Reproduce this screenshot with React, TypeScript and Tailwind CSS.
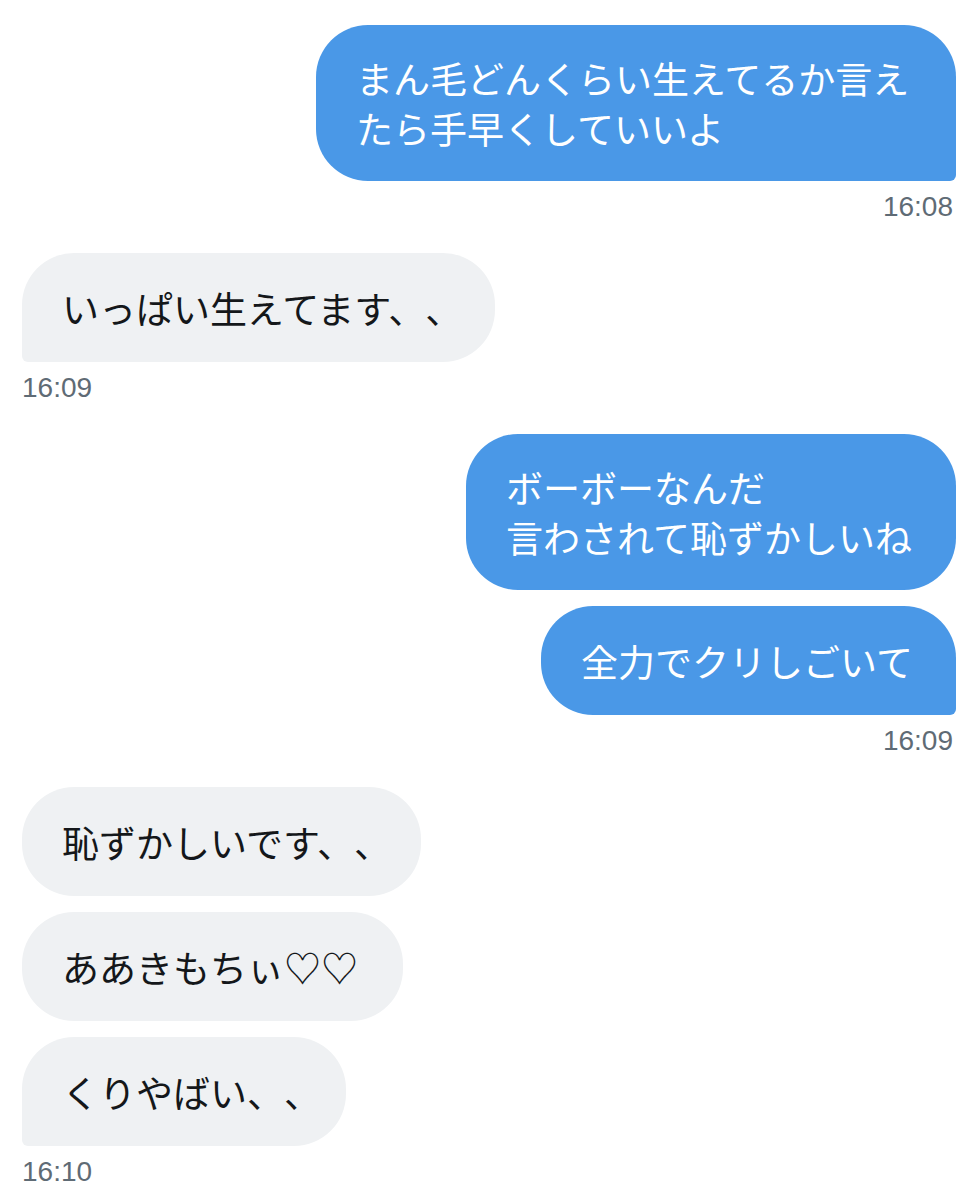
type Msg = {
  lines: string[];
  width: string;
  tail?: boolean;
};

type Group = {
  mine: boolean;
  time: string;
  msgs: Msg[];
};

const groups: Group[] = [
  {
    mine: true,
    time: "16:08",
    msgs: [{ lines: ["まん毛どんくらい生えてるか言え", "たら手早くしていいよ"], width: "w-[640px]", tail: true }],
  },
  {
    mine: false,
    time: "16:09",
    msgs: [{ lines: ["いっぱい生えてます、、"], width: "w-[473px]", tail: true }],
  },
  {
    mine: true,
    time: "16:09",
    msgs: [
      { lines: ["ボーボーなんだ", "言わされて恥ずかしいね"], width: "w-[490px]" },
      { lines: ["全力でクリしごいて"], width: "w-[415px]", tail: true },
    ],
  },
  {
    mine: false,
    time: "16:10",
    msgs: [
      { lines: ["恥ずかしいです、、"], width: "w-[399px]" },
      { lines: ["ああきもちぃ♡♡"], width: "w-[381px]" },
      { lines: ["くりやばい、、"], width: "w-[324px]", tail: true },
    ],
  },
];

function Bubble({ msg, mine }: { msg: Msg; mine: boolean }) {
  const corner = msg.tail ? (mine ? "rounded-br-[6px]" : "rounded-bl-[6px]") : "";
  const colors = mine ? "bg-[#4a98e7] text-white" : "bg-[#eff1f3] text-[#14171a]";
  const height = msg.lines.length > 1 ? "h-[156px]" : "h-[109px]";
  return (
    <div
      className={`${msg.width} ${height} ${colors} ${corner} flex flex-col justify-center rounded-[52px] pl-[40px] pr-2 text-[37px] leading-[50px] whitespace-nowrap [text-spacing-trim:space-all]`}
    >
      {msg.lines.map((l, i) => (
        <div key={i}>{l}</div>
      ))}
    </div>
  );
}

export default function App() {
  return (
    <div
      className="w-[979px] min-h-[1200px] bg-white pl-[22px] pr-[23px] pt-[25px]"
      style={{ fontFamily: '"Noto Sans CJK JP", "Noto Sans", sans-serif' }}
    >
      {groups.map((g, gi) => (
        <div key={gi} className={`flex flex-col ${g.mine ? "items-end" : "items-start"} mb-[30px]`}>
          <div className={`flex flex-col gap-[16px] ${g.mine ? "items-end" : "items-start"}`}>
            {g.msgs.map((m, mi) => (
              <Bubble key={mi} msg={m} mine={g.mine} />
            ))}
          </div>
          <div className="mt-[10px] h-[32px] pr-[3px] text-[28px] leading-[32px] text-[#5f6b75] font-['Liberation_Sans',sans-serif]">
            {g.time}
          </div>
        </div>
      ))}
    </div>
  );
}
